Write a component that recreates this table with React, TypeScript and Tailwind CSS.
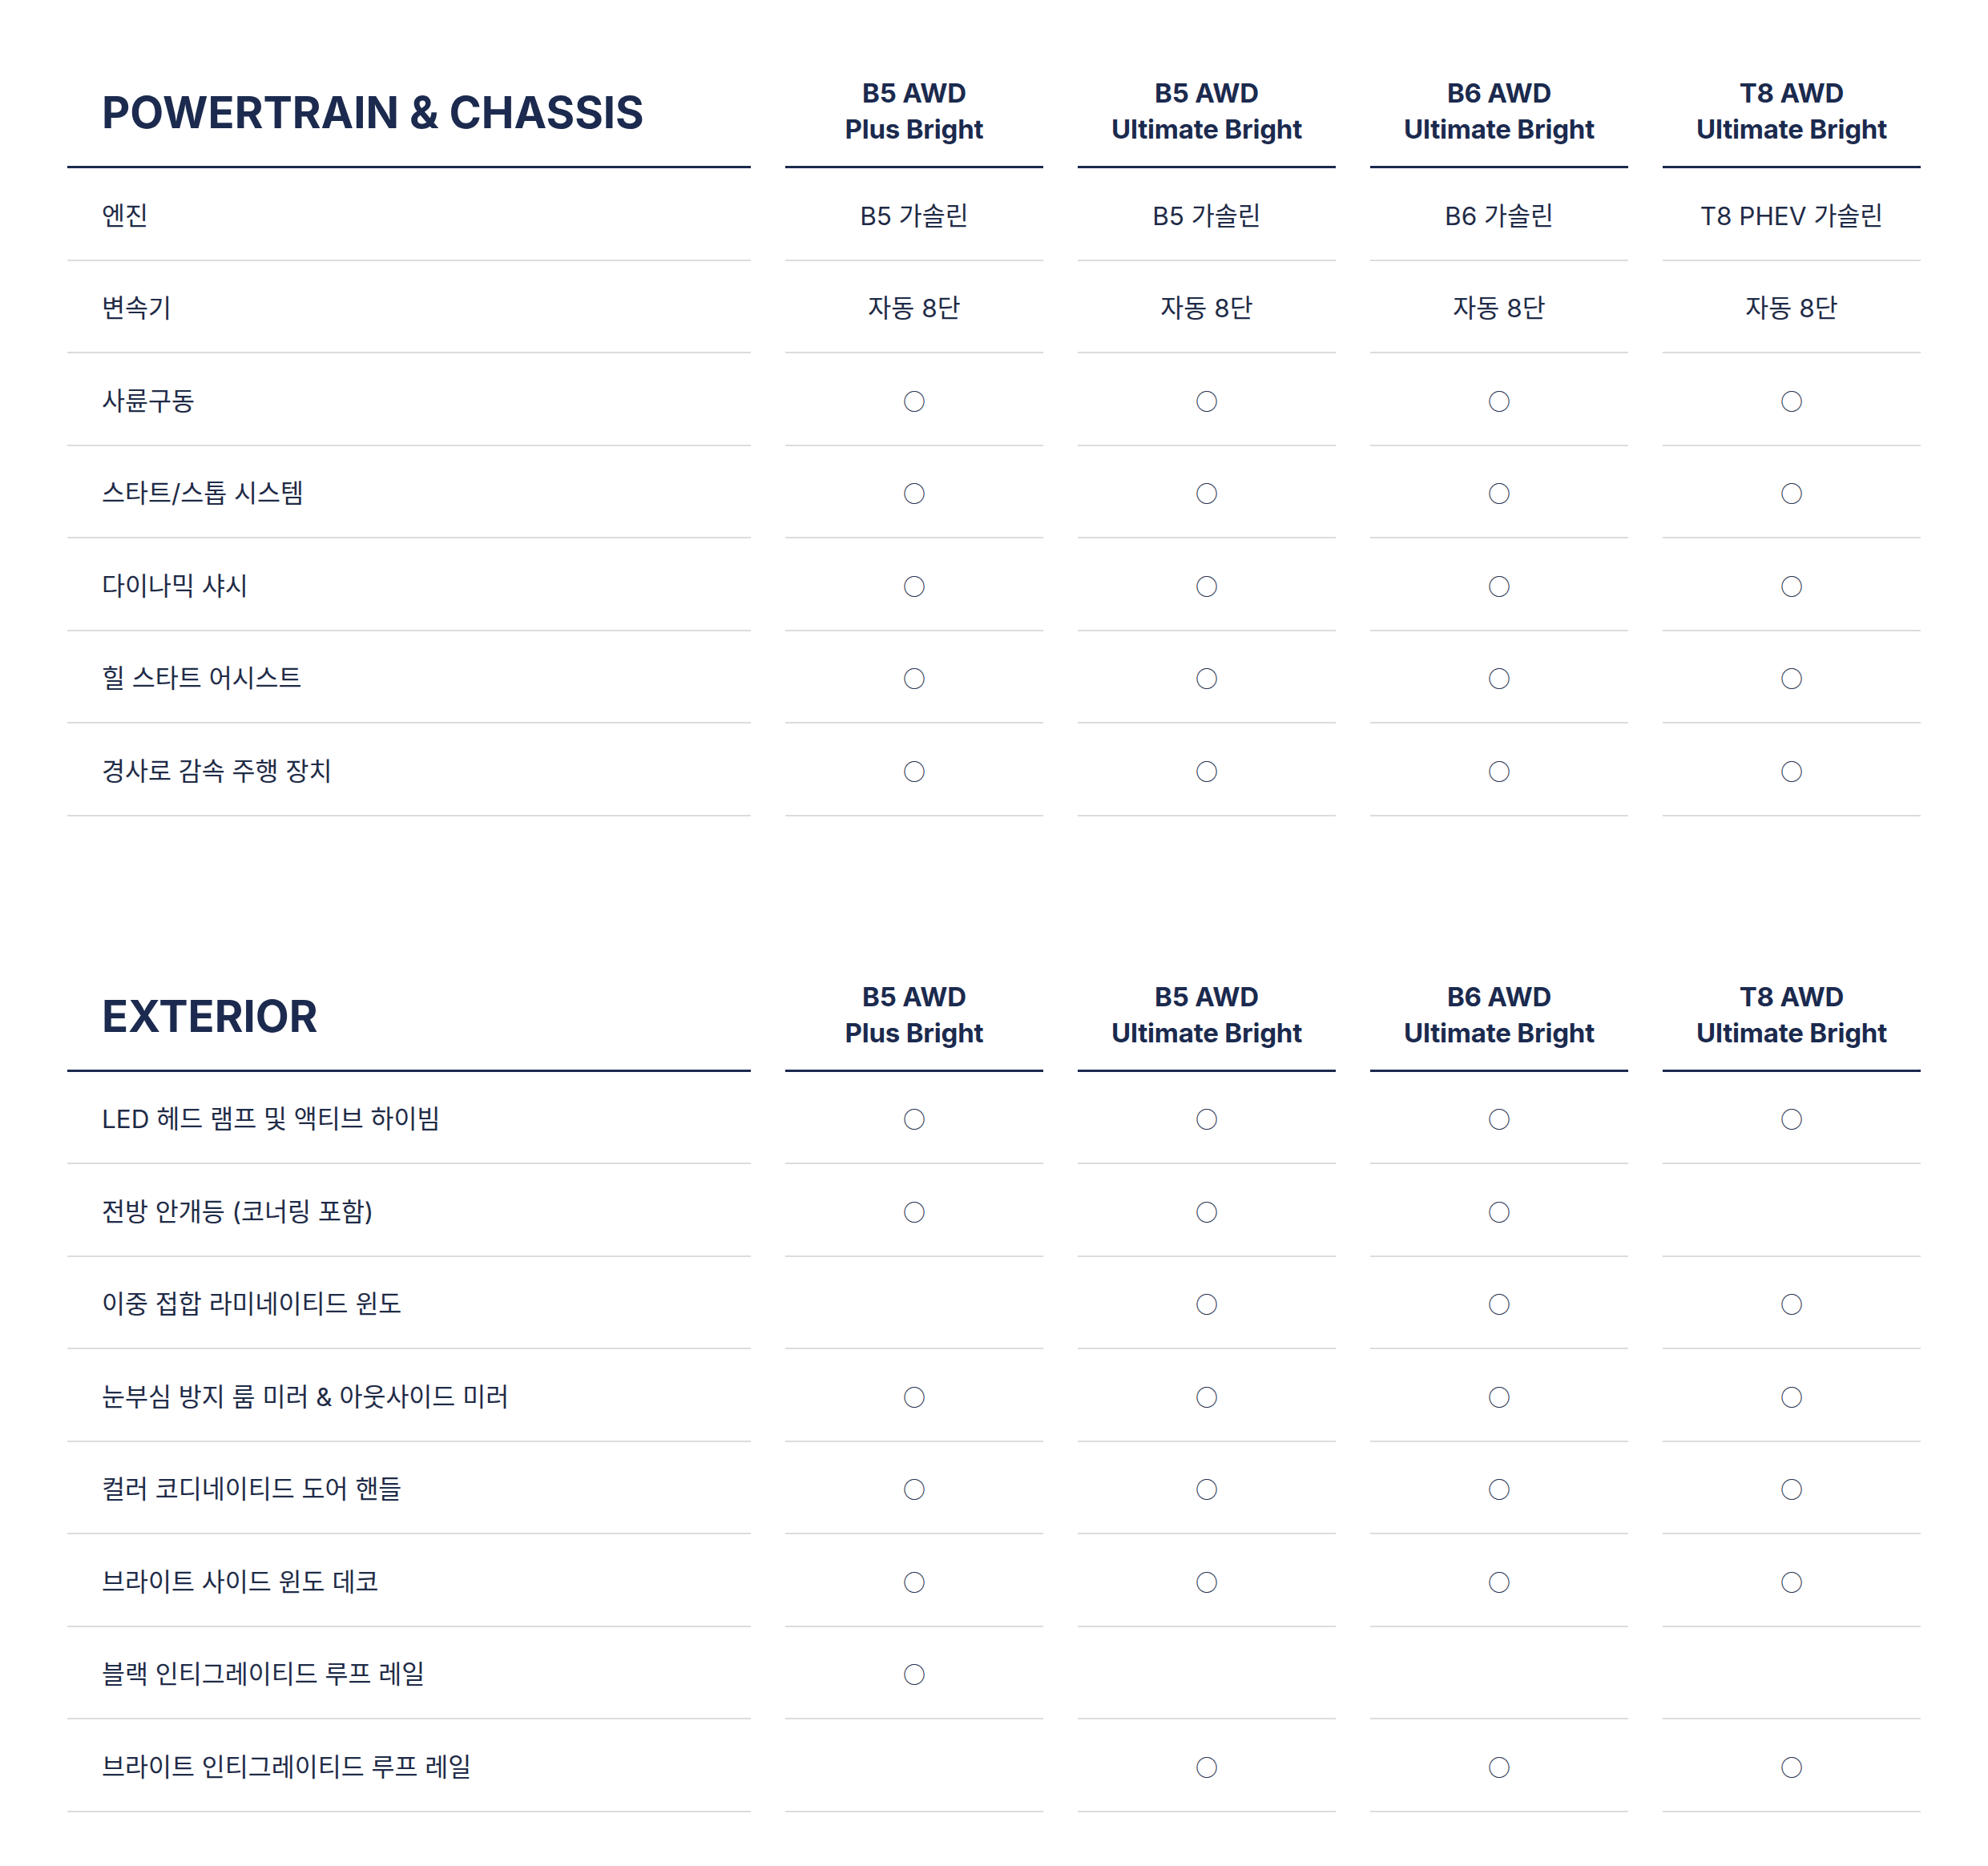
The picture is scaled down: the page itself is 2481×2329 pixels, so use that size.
import React from "react";

type Cell = string | boolean;
type Row = { label: string; cells: Cell[] };

const models = [
  ["B5 AWD", "Plus Bright"],
  ["B5 AWD", "Ultimate Bright"],
  ["B6 AWD", "Ultimate Bright"],
  ["T8 AWD", "Ultimate Bright"],
];

const powertrain: Row[] = [
  { label: "엔진", cells: ["B5 가솔린", "B5 가솔린", "B6 가솔린", "T8 PHEV 가솔린"] },
  { label: "변속기", cells: ["자동 8단", "자동 8단", "자동 8단", "자동 8단"] },
  { label: "사륜구동", cells: [true, true, true, true] },
  { label: "스타트/스톱 시스템", cells: [true, true, true, true] },
  { label: "다이나믹 샤시", cells: [true, true, true, true] },
  { label: "힐 스타트 어시스트", cells: [true, true, true, true] },
  { label: "경사로 감속 주행 장치", cells: [true, true, true, true] },
];

const exterior: Row[] = [
  { label: "LED 헤드 램프 및 액티브 하이빔", cells: [true, true, true, true] },
  { label: "전방 안개등 (코너링 포함)", cells: [true, true, true, false] },
  { label: "이중 접합 라미네이티드 윈도", cells: [false, true, true, true] },
  { label: "눈부심 방지 룸 미러 & 아웃사이드 미러", cells: [true, true, true, true] },
  { label: "컬러 코디네이티드 도어 핸들", cells: [true, true, true, true] },
  { label: "브라이트 사이드 윈도 데코", cells: [true, true, true, true] },
  { label: "블랙 인티그레이티드 루프 레일", cells: [true, false, false, false] },
  { label: "브라이트 인티그레이티드 루프 레일", cells: [false, true, true, true] },
];

const bodyFont = { fontFamily: "Inter, 'Noto Sans CJK KR', sans-serif" };

function Section({ title, rows, className = "" }: { title: string; rows: Row[]; className?: string }) {
  return (
    <div className={`grid grid-cols-[1fr_repeat(4,322px)] gap-x-[43px] ${className}`}>
      <div className="flex items-end border-b-[3px] border-[#1b2a4e] pl-[43px] pb-[39px]">
        <h2
          className="text-[54.5px] leading-[55px] font-bold text-[#1b2a4e]"
          style={{ fontFamily: "Inter, 'Noto Sans', sans-serif" }}
        >
          {title}
        </h2>
      </div>
      {models.map((m, i) => (
        <div
          key={i}
          className="flex flex-col items-center justify-end border-b-[3px] border-[#1b2a4e] pb-[23px] text-center text-[33px] leading-[45px] font-bold text-[#1b2a4e] tracking-[-0.2px]"
          style={{ fontFamily: "Inter, 'Noto Sans', sans-serif" }}
        >
          <span>{m[0]}</span>
          <span>{m[1]}</span>
        </div>
      ))}
      {rows.map((r, ri) => (
        <React.Fragment key={ri}>
          <div
            className="flex h-[115.5px] items-center border-b-2 border-[#dcdcdc] pl-[43px] pt-[5px] text-[31.5px] text-[#1f2b47]"
            style={bodyFont}
          >
            {r.label}
          </div>
          {r.cells.map((c, ci) => (
            <div
              key={ci}
              className={`flex h-[115.5px] items-center justify-center border-b-2 border-[#dcdcdc] text-[31.5px] text-[#1f2b47] ${
                typeof c === "string" ? "pt-[5px]" : "pt-[4px]"
              }`}
              style={bodyFont}
            >
              {typeof c === "string" ? (
                c
              ) : c ? (
                <span
                  className="text-[28px] leading-none text-[#2a3350]"
                  style={{ fontFamily: "'Noto Sans CJK KR', sans-serif" }}
                >
                  ○
                </span>
              ) : null}
            </div>
          ))}
        </React.Fragment>
      ))}
    </div>
  );
}

export default function App() {
  return (
    <div className="min-h-[2329px] w-full bg-white px-[84px] pt-[94px] pb-[66px]">
      <Section title="POWERTRAIN & CHASSIS" rows={powertrain} />
      <Section title="EXTERIOR" rows={exterior} className="mt-[203px]" />
    </div>
  );
}
